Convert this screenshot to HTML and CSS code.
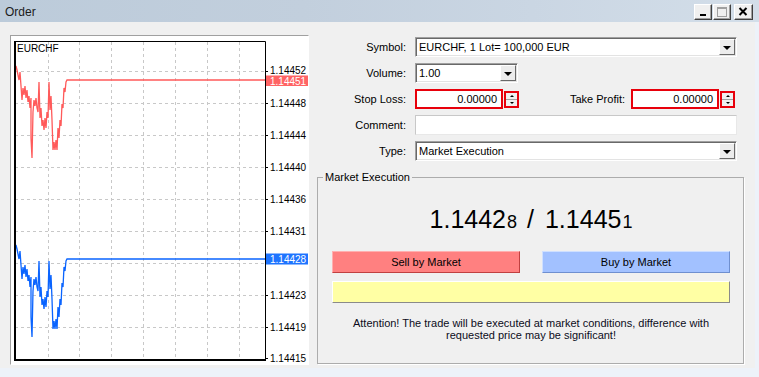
FILE: index.html
```html
<!DOCTYPE html>
<html lang="en">
<head>
  <meta charset="UTF-8" />
  <title>Order</title>
  <link rel="stylesheet" href="styles.css">
</head>
<body>
  <div class="window">
    <div class="titlebar">
      <span class="title">Order</span>
      <div class="tb-buttons">
        <span class="tb-btn"><svg width="16" height="14" viewBox="0 0 16 14"><rect x="5" y="9" width="6" height="2" fill="#000"/></svg></span>
        <span class="tb-btn"><svg width="16" height="14" viewBox="0 0 16 14"><rect x="3.5" y="2.5" width="9" height="9" fill="none" stroke="#a0a0a0"/><rect x="3" y="2" width="10" height="2" fill="#a0a0a0"/></svg></span>
        <span class="tb-btn close"><svg width="17" height="14" viewBox="0 0 17 14"><path d="M4.5 3 L11.5 10 M11.5 3 L4.5 10" stroke="#000" stroke-width="2"/></svg></span>
      </div>
    </div>

    <div class="content">
      <div class="chart">
        <svg width="297" height="328" viewBox="11 36 297 328">
          <defs>
            <polyline id="ticks" fill="none" stroke-width="1.3" points="15,66 15,72 16,66 17,70 18,75 19,80 20,72 21,86 22,100 23,88 24,95 25,86 26,98 27,90 28,102 29,96 30,108 31,98 31,138 32,158 33,112 34,100 35,106 36,98 37,108 38,112 39,82 40,118 41,108 42,126 43,120 44,130 45,118 46,128 47,112 48,118 49,82 50,110 51,96 52,120 53,150 54,142 55,150 56,140 57,150 58,128 59,138 60,120 61,126 62,104 63,108 64,88 65,92 66,82 67,80 265,80"/>
          </defs>
          <g stroke="#c8c8c8" stroke-dasharray="3 3">
            <path d="M48.5 42V359 M79.5 42V359 M111.5 42V359 M143.5 42V359 M175.5 42V359 M207.5 42V359 M239.5 42V359"/>
            <path d="M15 71.5H265 M15 103.5H265 M15 135.5H265 M15 167.5H265 M15 199.5H265 M15 231.5H265 M15 263.5H265 M15 295.5H265 M15 327.5H265"/>
          </g>
          <use href="#ticks" stroke="#ff5a5a"/>
          <use href="#ticks" stroke="#0a64ff" transform="translate(0,179)"/>
          <path d="M14.5 41.5H265.5V359.5 M14.5 41V361 M14 359.5H266" fill="none" stroke="#000"/>
          <path d="M14 360.5H266 M15.5 41V361" stroke="#000"/>
          <path d="M265 71.5h3 M265 103.5h3 M265 135.5h3 M265 167.5h3 M265 199.5h3 M265 231.5h3 M265 263.5h3 M265 295.5h3 M265 327.5h3 M265 358.5h3" stroke="#000"/>
          <text class="sym" x="17" y="52">EURCHF</text>
          <g class="axis">
            <text x="270" y="74">1.14452</text>
            <text x="270" y="107">1.14448</text>
            <text x="270" y="139">1.14444</text>
            <text x="270" y="171">1.14440</text>
            <text x="270" y="203">1.14436</text>
            <text x="270" y="235">1.14431</text>
            <text x="270" y="299">1.14423</text>
            <text x="270" y="331">1.14419</text>
            <text x="270" y="362">1.14415</text>
          </g>
          <rect x="266" y="75.5" width="42" height="10.5" fill="#ff6464"/>
          <text class="tag" x="270" y="84.5">1.14451</text>
          <rect x="266" y="253.5" width="42" height="11" fill="#1e74ff"/>
          <text class="tag" x="270" y="263">1.14428</text>
        </svg>
      </div>

      <div class="form">
        <div class="fields">
          <div class="row">
            <span class="label">Symbol:</span>
            <div class="combo wide">
              <span class="combo-text">EURCHF, 1 Lot= 100,000 EUR</span>
              <span class="drop"><i></i></span>
            </div>
          </div>
          <div class="row">
            <span class="label">Volume:</span>
            <div class="combo small">
              <span class="combo-text">1.00</span>
              <span class="drop"><i></i></span>
            </div>
          </div>
          <div class="row">
            <span class="label">Stop Loss:</span>
            <div class="num">0.00000</div>
            <div class="spin"><span class="up"></span><span class="down"></span></div>
            <span class="label take">Take Profit:</span>
            <div class="num">0.00000</div>
            <div class="spin"><span class="up"></span><span class="down"></span></div>
          </div>
          <div class="row">
            <span class="label">Comment:</span>
            <div class="edit wide"></div>
          </div>
          <div class="row">
            <span class="label">Type:</span>
            <div class="combo wide">
              <span class="combo-text">Market Execution</span>
              <span class="drop"><i></i></span>
            </div>
          </div>
        </div>

        <fieldset class="group">
          <legend>Market Execution</legend>
          <div class="group-body">
            <div class="price">
              <span>1.1442</span><span class="pip">8</span><span class="sep">/</span><span>1.1445</span><span class="pip">1</span>
            </div>
            <div class="trade-btns">
              <div class="btn sell">Sell by Market</div>
              <div class="btn buy">Buy by Market</div>
            </div>
            <div class="status-bar"></div>
            <p class="notice">Attention! The trade will be executed at market conditions, difference with<br>requested price may be significant!</p>
          </div>
        </fieldset>
      </div>
    </div>
  </div>
</body>
</html>
```

FILE: styles.css
```css
body {
  margin: 0;
  font-family: "Liberation Sans", Arial, sans-serif;
  font-size: 11px;
  color: #000;
  background: #fff;
}

.window {
  width: 759px;
  height: 377px;
  background: #edf2f9;
  overflow: hidden;
}

.titlebar {
  height: 22px;
  display: flex;
  align-items: center;
  justify-content: space-between;
  padding: 0 6px 0 5px;
  background: linear-gradient(90deg, #bccbda 0%, #c2cfdd 40%, #cad6e3 70%, #d3dee9 100%);
}

.title {
  font-size: 12px;
  color: #1b1b1b;
  margin-top: 1px;
}

.tb-buttons {
  display: flex;
  gap: 1px;
  margin-top: 2px;
}

.tb-btn {
  width: 18px;
  height: 16px;
  box-sizing: border-box;
  background: #f0f0f0;
  border: 1px solid;
  border-color: #fff #404040 #404040 #fff;
  box-shadow: inset -1px -1px 0 #a0a0a0;
  display: flex;
}

.tb-btn.close {
  width: 19px;
  margin-left: 2px;
}

.content {
  height: 346px;
  box-sizing: border-box;
  margin-right: 4px;
  padding: 13px 0 0 10px;
  background: #f0f0f0;
  display: flex;
}

.chart {
  width: 299px;
  height: 330px;
  box-sizing: border-box;
  background: #fff;
  border: 1px solid;
  border-color: #a0a0a0 #fff #fff #a0a0a0;
  flex-shrink: 0;
}

.chart svg {
  display: block;
}

.chart text {
  font-family: "Liberation Sans", Arial, sans-serif;
  font-size: 10px;
  fill: #000;
}

.chart .tag {
  fill: #fff;
}

.form {
  width: 446px;
  margin-top: 2px;
}

.fields {
  display: flex;
  flex-direction: column;
  gap: 6px;
}

.row {
  display: flex;
  align-items: center;
  height: 20px;
}

.label {
  width: 97px;
  margin-right: 9px;
  text-align: right;
  flex-shrink: 0;
}

.label.take {
  width: 106px;
  margin-right: 6px;
}

.combo,
.edit {
  height: 20px;
  box-sizing: border-box;
  background: #fff;
  border: 1px solid;
  border-color: #a0a0a0 #fff #fff #a0a0a0;
  box-shadow: inset 1px 1px 0 #696969, inset -1px -1px 0 #e3e3e3;
  display: flex;
  align-items: center;
}

.edit {
  border-color: #c8c8c8 #e8e8e8 #e8e8e8 #c8c8c8;
  box-shadow: none;
}

.wide {
  width: 322px;
}

.small {
  width: 103px;
}

.combo-text {
  flex: 1;
  padding-left: 3px;
}

.drop {
  width: 16px;
  height: 16px;
  box-sizing: border-box;
  margin-right: 1px;
  background: #ececec;
  border: 1px solid;
  border-color: #fff #696969 #696969 #fff;
  display: flex;
  align-items: center;
  justify-content: center;
}

.drop i {
  width: 0;
  height: 0;
  border-left: 4px solid transparent;
  border-right: 4px solid transparent;
  border-top: 4px solid #000;
  margin-top: 1px;
}

.num {
  width: 88px;
  height: 20px;
  box-sizing: border-box;
  border: 2px solid #e8000b;
  background: #fff;
  text-align: right;
  padding-right: 4px;
  line-height: 16px;
}

.spin {
  width: 15px;
  height: 17px;
  box-sizing: border-box;
  margin-left: 1px;
  border: 2px solid #e8000b;
  background: #f0f0f0;
  display: flex;
  flex-direction: column;
}

.spin span {
  flex: 1;
  display: flex;
  align-items: center;
  justify-content: center;
  border-bottom: 1px solid #a0a0a0;
}

.spin span::after {
  content: "";
  border-left: 2px solid transparent;
  border-right: 2px solid transparent;
}

.spin .up::after {
  border-bottom: 2px solid #000;
}

.spin .down {
  border-bottom: none;
}

.spin .down::after {
  border-top: 2px solid #000;
}

.group {
  margin: 10px 0 0 8px;
  padding: 0;
  width: 427px;
  height: 193px;
  box-sizing: border-box;
  border: 1px solid #acacac;
  box-shadow: 1px 1px 0 #fff;
  min-width: 0;
}

.group legend {
  margin-left: 5px;
  padding: 0 2px;
  line-height: 13px;
}

.group-body {
  padding: 0 13px 0 14px;
}

.price {
  margin-top: 20px;
  height: 30px;
  line-height: 30px;
  text-align: center;
  font-size: 25px;
  white-space: nowrap;
}

.price .pip {
  font-size: 18px;
  margin-left: 1px;
}

.price .sep {
  margin: 0 11px 0 10px;
}

.trade-btns {
  display: flex;
  justify-content: space-between;
  margin-top: 17px;
}

.btn {
  width: 188px;
  height: 22px;
  box-sizing: border-box;
  line-height: 20px;
  text-align: center;
  border: 1px solid;
}

.sell {
  background: #ff8080;
  border-color: #ffb0b0 #c04040 #c04040 #ffb0b0;
}

.buy {
  background: #a2c1ff;
  border-color: #cfe0ff #6f8fcf #6f8fcf #cfe0ff;
}

.status-bar {
  margin-top: 8px;
  height: 22px;
  box-sizing: border-box;
  background: #ffffa4;
  border: 1px solid;
  border-color: #fff #8a8a8a #8a8a8a #fff;
}

.notice {
  margin: 14px 0 0;
  line-height: 12px;
  text-align: center;
  color: #0c0c20;
}
```
